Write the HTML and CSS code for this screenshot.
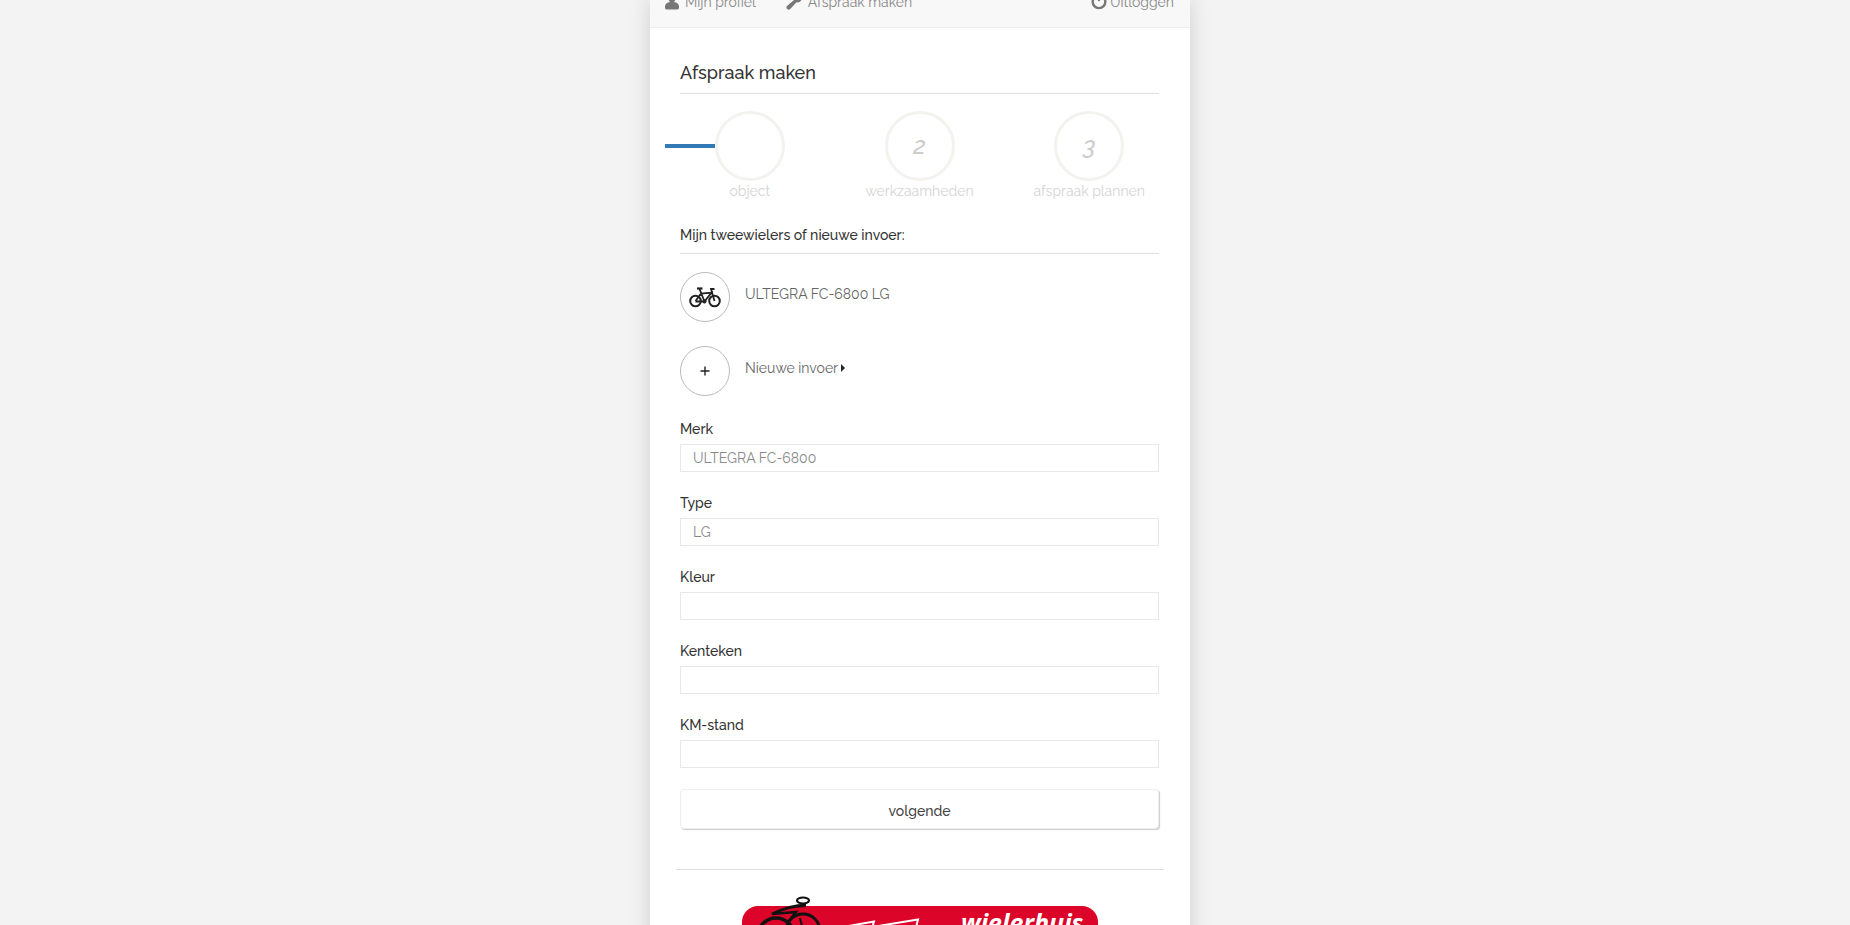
FILE: index.html
```
<!DOCTYPE html>
<html lang="nl">
<head>
    <meta charset="UTF-8">
    <meta name="viewport" content="width=device-width, initial-scale=1.0">
    <title>Afspraak maken</title>
    <link rel="stylesheet" href="styles.css">
</head>
<body>
    <div class="page">
        <nav class="navbar">
            <a href="#profiel">
                <svg class="icon" viewBox="0 0 14 16"><path d="M7 1a3.500 3.500 0 0 1 3.500 3.500c0 1.500-.6 2.700-1.500 3.500C12 8.300 14 10 14 12.500v1c0 1.500-.8 2-2 2H2c-1.200 0-2-.5-2-2v-1C0 10 2 8.300 5 8 4.100 7.200 3.500 6 3.500 4.500A3.500 3.500 0 0 1 7 1z"/></svg>
                Mijn profiel
            </a>
            <a href="#afspraak">
                <svg class="icon wide" viewBox="0 0 16 16"><path d="M1 12 8 6A4.300 4.300 0 0 1 13 .6L10.800 3l.4 1.800 2 .5L15.500 3c1 3-1.500 6-5 5.300L4 15.200C2 16.800-.8 14 1 12z"/></svg>
                Afspraak maken
            </a>
            <a href="#uitloggen" class="logout">
                <svg class="icon wide" viewBox="0 0 16 16"><path d="M4 3A6.300 6.300 0 1 0 12 3M8 0v6" fill="none" stroke="#777" stroke-width="2.400" stroke-linecap="round"/></svg>
                Uitloggen
            </a>
        </nav>

        <main class="content">
            <h1>Afspraak maken</h1>

            <!-- Stappen -->
            <ol class="steps">
                <li class="active"><div class="track"><span class="circle"></span></div>object</li>
                <li><div class="track"><span class="circle">2</span></div>werkzaamheden</li>
                <li><div class="track"><span class="circle">3</span></div>afspraak plannen</li>
            </ol>

            <h2>Mijn tweewielers of nieuwe invoer:</h2>
            <div class="bikes">
                <a href="#fiets" class="bike">
                    <span class="round">
                        <svg class="bike-icon" viewBox="0 0 32 21" fill="none" stroke="#222">
                            <g stroke-width="2"><circle cx="6.500" cy="14" r="5.300"/><circle cx="25.500" cy="14" r="5.300"/></g>
                            <path d="M6.500 14 12 6.500 22.500 5.500 15.500 14.500H6.500M15.500 14.500 10.500 2M25.500 14 22 2h3.500" stroke-width="1.800"/>
                            <path d="M8 1.500h5.500" stroke-width="2.200"/>
                            <circle cx="15.500" cy="14.500" r="1.600" fill="#222"/>
                        </svg>
                    </span>
                    <span class="bike-name">ULTEGRA FC-6800 LG</span>
                </a>
                <a href="#nieuw" class="bike">
                    <span class="round">
                        <svg class="plus-icon" viewBox="0 0 10 10"><path d="M5 0.500v9M0.500 5h9" stroke="#222" stroke-width="1.400"/></svg>
                    </span>
                    <span class="bike-name">Nieuwe invoer<span class="caret"></span></span>
                </a>
            </div>

            <form>
                <div class="field">
                    <label for="merk">Merk</label>
                    <input type="text" id="merk" value="ULTEGRA FC-6800">
                </div>
                <div class="field">
                    <label for="type">Type</label>
                    <input type="text" id="type" value="LG">
                </div>
                <div class="field">
                    <label for="kleur">Kleur</label>
                    <input type="text" id="kleur">
                </div>
                <div class="field">
                    <label for="kenteken">Kenteken</label>
                    <input type="text" id="kenteken">
                </div>
                <div class="field">
                    <label for="kmstand">KM-stand</label>
                    <input type="text" id="kmstand">
                </div>
                <button type="submit" class="next">volgende</button>
            </form>
        </main>

        <footer>
            <svg class="logo" viewBox="0 0 356 100" role="img" aria-label="wielerhuis">
                <rect x="0" y="10" width="356" height="90" rx="16" fill="#dc0428"/>
                <g fill="none" stroke="#111">
                    <ellipse cx="61" cy="4.500" rx="6" ry="3" stroke-width="2.200"/>
                    <path d="M64 9 C50 9 40 13 30 18 L54 16 L46 26 M30 18 C42 13 52 9 64 10" stroke-width="2.600"/>
                    <circle cx="34" cy="40" r="18" stroke-width="3.500"/>
                    <circle cx="61" cy="35" r="17" stroke-width="3"/>
                    <path d="M58 22l3 12" stroke-width="2"/>
                </g>
                <path d="M84 34 132 25.500 126 46M130 31 176 23.500 170 46" fill="none" stroke="#fff" stroke-width="2"/>
                <text x="219" y="36" class="logo-text">wielerhuis</text>
            </svg>
        </footer>
    </div>
</body>
</html>
```
FILE: styles.css
```
* {
    box-sizing: border-box;
}

body {
    margin: 0;
    padding-right: 10px;
    height: 100vh;
    overflow: hidden;
    background-color: #f3f3f3;
    font-family: Raleway, Lato, sans-serif;
    font-size: 14px;
    line-height: 20px;
    color: #333;
}

a {
    color: inherit;
    text-decoration: none;
}

.page {
    max-width: 540px;
    min-height: 100vh;
    margin: 0 auto;
    background-color: #fff;
    box-shadow: 0 0 20px rgba(0, 0, 0, 0.15);
}

/* Navigation */
.navbar {
    display: flex;
    align-items: flex-end;
    gap: 30px;
    height: 28px;
    padding: 0 16px 15px 15px;
    background-color: #f8f8f8;
    border-bottom: 1px solid #eee;
    color: #888;
}

.navbar a {
    display: flex;
    align-items: center;
    gap: 6px;
}

.navbar .logout {
    margin-left: auto;
    gap: 3px;
}

.icon {
    width: 14px;
    height: 16px;
    fill: #777;
}

.icon.wide {
    width: 16px;
}

.content {
    padding: 32px 31px 40px 30px;
}

h1,
h2 {
    margin: 0;
    border-bottom: 1px solid #e0e0e0;
}

h1 {
    padding-bottom: 8px;
    font-size: 18px;
    font-weight: 500;
    line-height: 25px;
}

h2 {
    padding-bottom: 8px;
    font-size: 14px;
    font-weight: 500;
}

/* Steps */
.steps {
    display: flex;
    margin: 17px -15px 24px;
    padding: 0;
    list-style: none;
}

.steps li {
    flex: 1;
    text-align: center;
    font-weight: 400;
    color: #d4d4d4;
}

.track {
    display: flex;
    align-items: center;
    justify-content: center;
}

.steps .active .track::before {
    content: "";
    flex: 1;
    height: 4px;
    background-color: #337ab7;
}

.steps .active .track::after {
    content: "";
    flex: 1;
}

.circle {
    width: 70px;
    height: 70px;
    border: 3px solid #f3f2ee;
    border-radius: 50%;
    font-size: 24px;
    font-style: italic;
    font-weight: 500;
    line-height: 64px;
    color: #ccc;
}

/* Bikes */
.bikes {
    display: grid;
    gap: 24px;
    margin: 18px 0 23px;
}

.bike {
    display: flex;
    align-items: center;
}

.bike-name {
    display: flex;
    align-items: center;
    padding-bottom: 6px;
    font-weight: 400;
    color: #666;
}

.round {
    display: flex;
    align-items: center;
    justify-content: center;
    width: 50px;
    height: 50px;
    margin-right: 15px;
    border: 1px solid #bbb;
    border-radius: 50%;
}

.bike-icon {
    width: 32px;
    height: 21px;
}

.plus-icon {
    width: 10px;
    height: 10px;
}

.caret {
    margin-left: 3px;
    border-left: 4px solid #222;
    border-top: 4px solid transparent;
    border-bottom: 4px solid transparent;
}

/* Form */
.field {
    margin-bottom: 21px;
}

.field label {
    display: block;
    margin-bottom: 5px;
    font-weight: 500;
}

.field input {
    display: block;
    width: 100%;
    height: 28px;
    padding: 0 12px;
    border: 1px solid #e8e8e8;
    background-color: #fff;
    font: inherit;
    color: #888;
}

.next {
    display: block;
    width: 100%;
    height: 40px;
    padding-top: 5px;
    border: 1px solid #eee;
    border-radius: 4px;
    background-color: #fff;
    box-shadow: 1px 1px 1px #ccc;
    font: inherit;
    font-weight: 500;
    color: #444;
}

footer {
    margin: 0 26px;
    padding-top: 26px;
    border-top: 1px solid #ddd;
    text-align: center;
}

.logo {
    width: 356px;
    height: 100px;
}

.logo-text {
    font-family: "Open Sans", sans-serif;
    font-size: 25px;
    font-style: italic;
    font-weight: 700;
    fill: #fff;
}
```
